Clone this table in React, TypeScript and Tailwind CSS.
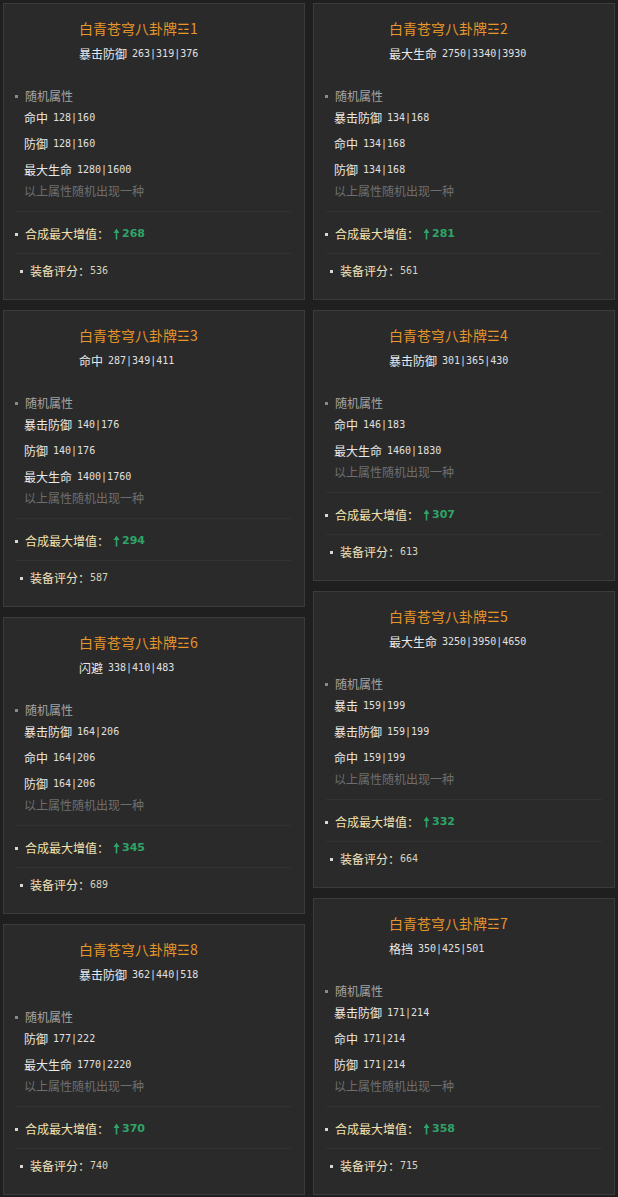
import React from "react";

type Card = {
  n: number;
  main: string;
  mainVal: string;
  rows: [string, string][];
  inc: number;
  score: number;
};

const left: Card[] = [
  { n: 1, main: "暴击防御", mainVal: "263|319|376", rows: [["命中", "128|160"], ["防御", "128|160"], ["最大生命", "1280|1600"]], inc: 268, score: 536 },
  { n: 3, main: "命中", mainVal: "287|349|411", rows: [["暴击防御", "140|176"], ["防御", "140|176"], ["最大生命", "1400|1760"]], inc: 294, score: 587 },
  { n: 6, main: "闪避", mainVal: "338|410|483", rows: [["暴击防御", "164|206"], ["命中", "164|206"], ["防御", "164|206"]], inc: 345, score: 689 },
  { n: 8, main: "暴击防御", mainVal: "362|440|518", rows: [["防御", "177|222"], ["最大生命", "1770|2220"]], inc: 370, score: 740 },
];

const right: Card[] = [
  { n: 2, main: "最大生命", mainVal: "2750|3340|3930", rows: [["暴击防御", "134|168"], ["命中", "134|168"], ["防御", "134|168"]], inc: 281, score: 561 },
  { n: 4, main: "暴击防御", mainVal: "301|365|430", rows: [["命中", "146|183"], ["最大生命", "1460|1830"]], inc: 307, score: 613 },
  { n: 5, main: "最大生命", mainVal: "3250|3950|4650", rows: [["暴击", "159|199"], ["暴击防御", "159|199"], ["命中", "159|199"]], inc: 332, score: 664 },
  { n: 7, main: "格挡", mainVal: "350|425|501", rows: [["暴击防御", "171|214"], ["命中", "171|214"], ["防御", "171|214"]], inc: 358, score: 715 },
];

const cjk = "font-['Noto_Sans_CJK_SC',sans-serif] font-normal";
const num = "font-['DejaVu_Sans_Mono','Liberation_Mono',monospace] text-[10px]";

function Arrow() {
  return (
    <svg width="7" height="12" viewBox="0 0 7 12" className="mr-[2px]">
      <path d="M3.5 0.5 L6.5 5 L4.3 5 L4.3 11.5 L2.7 11.5 L2.7 5 L0.5 5 Z" fill="#2fa468" />
    </svg>
  );
}

function CardView({ c }: { c: Card }) {
  return (
    <div className={`border border-[#3b3b3b] bg-[#2a2a2a] pt-[14px] pb-[18px] ${cjk}`}>
      <div className="pl-[75px] text-[14px] leading-[20px] text-[#e6962a]">白青苍穹八卦牌☲{c.n}</div>
      <div className="mt-[6px] flex items-center pl-[75px] text-[12px] leading-[20px] text-[#e9e9e9]">
        <span>{c.main}</span>
        <span className={`ml-[5px] ${num} text-[#e0e0e0]`}>{c.mainVal}</span>
      </div>
      <div className="mt-[22px] flex items-center pl-[11px] text-[12px] leading-[20px] text-[#a3a3a3]">
        <span className="mr-[7px] h-[3px] w-[3px] bg-[#8a8a8a]" />
        <span>随机属性</span>
      </div>
      <div className="mt-[2px] flex flex-col gap-[6px] pl-[20px]">
        {c.rows.map(([k, v], i) => (
          <div key={i} className="flex items-center text-[12px] leading-[20px] text-[#e9e9e9]">
            <span>{k}</span>
            <span className={`ml-[5px] ${num} text-[#e0e0e0]`}>{v}</span>
          </div>
        ))}
      </div>
      <div className="mt-[1px] pl-[20px] text-[12px] leading-[20px] text-[#6e6e6e]">以上属性随机出现一种</div>
      <div className="mx-[12px] mt-[10px] h-px bg-[#323232]" />
      <div className="mt-[12px] flex items-center pl-[11px] text-[12px] leading-[20px] text-[#f1e3b3]">
        <span className="mr-[7px] h-[3px] w-[3px] bg-[#d8d8d8]" />
        <span>合成最大增值：</span>
        <span className="ml-[4px] flex items-center">
          <Arrow />
          <span className="font-['DejaVu_Sans',sans-serif] text-[11px] font-bold text-[#2fa468]">{c.inc}</span>
        </span>
      </div>
      <div className="mx-[12px] mt-[9px] h-px bg-[#323232]" />
      <div className="mt-[7px] flex items-center pl-[16px] text-[12px] leading-[20px] text-[#efe3bf]">
        <span className="mr-[7px] h-[3px] w-[3px] bg-[#d8d8d8]" />
        <span>装备评分：</span>
        <span className={`${num} text-[#d9d2bb]`}>{c.score}</span>
      </div>
    </div>
  );
}

export default function App() {
  return (
    <div className="min-h-[1197px] w-[618px] bg-[#1f1f1f] p-[3px]">
      <div className="flex gap-[8px]">
        <div className="flex w-[302px] flex-col gap-[10px]">
          {left.map((c) => (
            <CardView key={c.n} c={c} />
          ))}
        </div>
        <div className="flex w-[302px] flex-col gap-[10px]">
          {right.map((c) => (
            <CardView key={c.n} c={c} />
          ))}
        </div>
      </div>
    </div>
  );
}
